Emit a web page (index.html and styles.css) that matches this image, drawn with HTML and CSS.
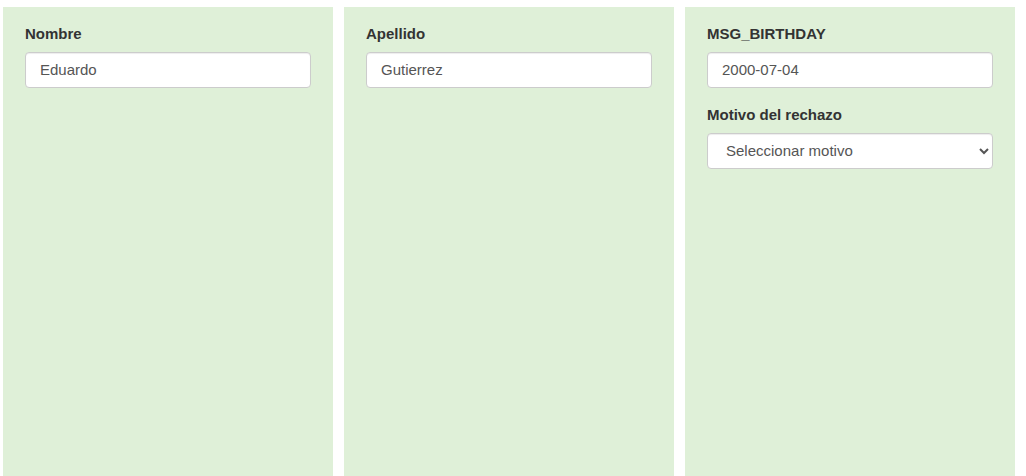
FILE: index.html
```html
<!DOCTYPE html>
<html lang="es">
<head>
<meta charset="utf-8">
<title>Formulario</title>
<link rel="stylesheet" href="styles.css">
</head>
<body>
<div class="row">
  <div class="panel">
    <div class="form-group">
      <label class="label">Nombre</label>
      <input class="control" type="text" value="Eduardo">
    </div>
  </div>
  <div class="panel">
    <div class="form-group">
      <label class="label">Apellido</label>
      <input class="control" type="text" value="Gutierrez">
    </div>
  </div>
  <div class="panel">
    <div class="form-group">
      <label class="label">MSG_BIRTHDAY</label>
      <input class="control" type="text" value="2000-07-04">
    </div>
    <div class="form-group">
      <label class="label">Motivo del rechazo</label>
      <select class="control select">
        <option>Seleccionar motivo</option>
      </select>
    </div>
  </div>
</div>
</body>
</html>
```
FILE: styles.css
```css
html, body {
  margin: 0;
  padding: 0;
  background: #ffffff;
  overflow: hidden;
}
body {
  font-family: "Liberation Sans", Arial, sans-serif;
  font-size: 15px;
  color: #333333;
}
.row {
  display: flex;
  gap: 11px;
  padding: 7px 0 0 3px;
}
.panel {
  width: 330px;
  height: 469px;
  box-sizing: border-box;
  background: #dff0d8;
  padding: 17px 22px 0 22px;
}
.form-group {
  display: flex;
  flex-direction: column;
  margin-bottom: 17px;
}
.label {
  display: block;
  font-weight: bold;
  line-height: 20px;
  margin-bottom: 8px;
  color: #333333;
}
.control {
  box-sizing: border-box;
  width: 100%;
  height: 36px;
  padding: 0 14px 1px 14px;
  font-family: "Liberation Sans", Arial, sans-serif;
  font-size: 15px;
  color: #555555;
  background: #ffffff;
  border: 1px solid #cccccc;
  border-radius: 4px;
  box-shadow: inset 0 1px 1px rgba(0, 0, 0, 0.075);
  outline: none;
}
.select {
  padding-left: 14px;
  padding-right: 6px;
}
```
